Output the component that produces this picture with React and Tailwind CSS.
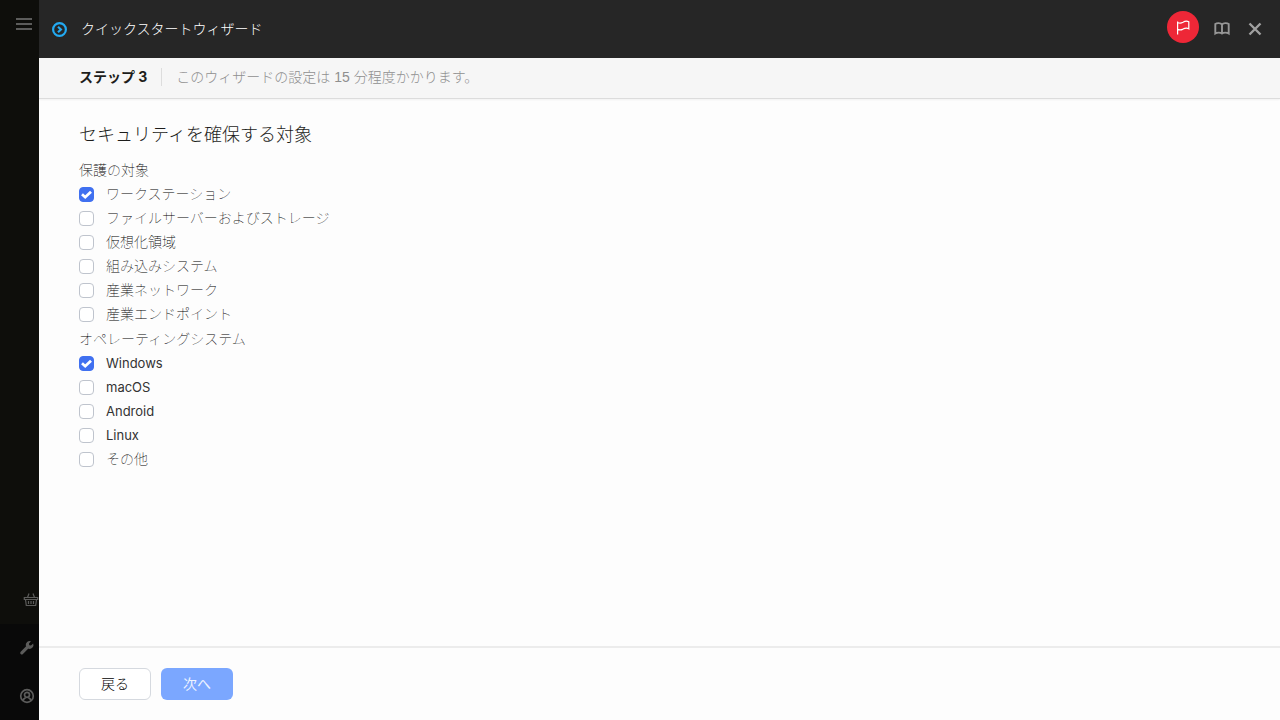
import { useState } from "react";

const latin = "font-['Inter',sans-serif] text-[13px] font-normal text-[#333333]";

const targets = [
  { id: "workstations", label: "ワークステーション", on: true },
  { id: "storage", label: "ファイルサーバーおよびストレージ" },
  { id: "virtual", label: "仮想化領域" },
  { id: "embedded", label: "組み込みシステム" },
  { id: "network", label: "産業ネットワーク" },
  { id: "endpoint", label: "産業エンドポイント" },
];

const systems = [
  { id: "windows", label: "Windows", on: true, textClass: latin },
  { id: "macos", label: "macOS", textClass: latin },
  { id: "android", label: "Android", textClass: latin },
  { id: "linux", label: "Linux", textClass: latin },
  { id: "other", label: "その他" },
];

function Option({ id, label, on = false, textClass = "" }) {
  const [checked, setChecked] = useState(on);
  return (
    <div className="flex h-6 items-center gap-3">
      <span className="relative flex size-[15px]">
        <input
          id={id}
          type="checkbox"
          checked={checked}
          onChange={(e) => setChecked(e.target.checked)}
          className="size-[15px] appearance-none rounded-[4px] border border-[#bfc4cd] bg-white checked:border-[#4070f0] checked:bg-[#4070f0]"
        />
        {checked && (
          <svg viewBox="0 0 15 15" className="pointer-events-none absolute inset-0 size-[15px]" fill="none" stroke="#fff" strokeWidth="2.8" aria-hidden="true">
            <path d="M3 7.3 6.2 10.2 12 4.8" />
          </svg>
        )}
      </span>
      <label htmlFor={id} className={textClass}>{label}</label>
    </div>
  );
}

function Group({ title, items }) {
  return (
    <fieldset>
      <legend className="h-6 leading-6">{title}</legend>
      {items.map((item) => (
        <Option key={item.id} {...item} />
      ))}
    </fieldset>
  );
}

function Sidebar() {
  return (
    <nav className="flex w-[39px] shrink-0 flex-col justify-between overflow-hidden bg-[#0e0e0b] text-[#5c5c5b]">
      <button type="button" aria-label="メニュー" className="mt-4 ml-4 size-4">
        <svg viewBox="0 0 16 16" className="size-4" stroke="currentColor" strokeWidth="2" aria-hidden="true">
          <path d="M0 3H16M0 8H16M0 13H16" />
        </svg>
      </button>
      <div>
        <button type="button" aria-label="ストア" className="mb-4 ml-[23px] block size-4">
          <svg viewBox="0 0 16 16" className="size-4" fill="none" stroke="currentColor" strokeWidth="1.2" aria-hidden="true">
            <path d="M1.3 5.5H14.7V7.5H1.3ZM2.5 7.5 3.3 13.5H12.7L13.5 7.5M4.5 5.5 6 1.5M11.5 5.5 10 1.5" />
            <path d="M5.5 9V12M8 9V12M10.5 9V12" />
          </svg>
        </button>
        <div className="flex h-24 flex-col gap-8 bg-[#090909] pt-4 pl-[19px]">
          <button type="button" aria-label="設定" className="size-4">
            <svg viewBox="0 0 16 16" className="size-4" aria-hidden="true">
              <path d="M2.8 12.8 9 6.6" stroke="currentColor" strokeWidth="3.2" strokeLinecap="round" />
              <path d="M12 1.2A4 4 0 0 0 6.8 5.8L9.6 8.8A4 4 0 0 0 14.2 3.5L12 5.6 10.2 5.3 10 3.4Z" fill="currentColor" />
            </svg>
          </button>
          <button type="button" aria-label="アカウント" className="size-4">
            <svg viewBox="0 0 16 16" className="size-4" fill="none" stroke="currentColor" strokeWidth="1.7" aria-hidden="true">
              <circle cx="8" cy="8" r="6.3" />
              <circle cx="8" cy="6.8" r="2.5" />
              <path d="M4 12.5C4.5 10.8 5.5 10.3 6.6 9.8M12 12.5C11.5 10.8 10.5 10.3 9.4 9.8" />
            </svg>
          </button>
        </div>
      </div>
    </nav>
  );
}

export default function App() {
  return (
    <div className="flex min-h-screen font-['Liberation_Sans','Noto_Sans_CJK_JP',sans-serif] text-sm text-[#1d1d1b]">
      <Sidebar />
      <main className="flex min-w-0 flex-1 flex-col bg-[#fdfdfd]">
        <header className="flex h-[58px] shrink-0 items-center bg-[#262626] pr-[18px] pl-3 text-white">
          <svg viewBox="0 0 16 16" className="mr-3.5 size-4" fill="none" stroke="#23aaf2" strokeWidth="2.2" aria-hidden="true">
            <circle cx="8.5" cy="8.5" r="6.4" />
            <path d="M7 5.7 9.9 8.5 7 11.3" />
          </svg>
          <h1 className="flex-1 font-light">クイックスタートウィザード</h1>
          <button type="button" aria-label="フラグ" className="mb-1 flex size-8 items-center justify-center rounded-full bg-[#ee2737]">
            <svg viewBox="0 0 16 16" className="size-4" fill="none" stroke="#fff" strokeWidth="1.2" aria-hidden="true">
              <path d="M2.6 2.5V15.5M2.6 3.5C4 4.2 6 4.4 8 3.3 10 2 12 1.8 13.8 2.8V9.8C12 8.6 10.2 8.8 8 10.1 6 11.2 4 11 2.6 10.4" />
            </svg>
          </button>
          <button type="button" aria-label="ヘルプ" className="ml-[15px] size-4 text-[#969696]">
            <svg viewBox="0 0 16 16" className="size-4" fill="none" stroke="currentColor" strokeWidth="1.9" aria-hidden="true">
              <path d="M8 3.5C6.5 1.8 3 1.8 1.3 3V12.5C3 11.3 6.5 11.3 8 12.5 9.5 11.3 13 11.3 14.7 12.5V3C13 1.8 9.5 1.8 8 3.5ZM8 3.5V12.5" />
            </svg>
          </button>
          <button type="button" aria-label="閉じる" className="ml-[18px] size-[14px] text-[#a0a0a0]">
            <svg viewBox="0 0 14 14" className="size-[14px]" stroke="currentColor" strokeWidth="2.4" aria-hidden="true">
              <path d="M1.5 1.5 12.5 12.5M12.5 1.5 1.5 12.5" />
            </svg>
          </button>
        </header>
        <div className="flex h-[41px] shrink-0 items-center border-b border-[#dcdcdc] bg-[#f6f6f6] pb-0.5 pl-10 shadow-xs">
          <strong className="font-['Inter','Noto_Sans_CJK_JP',sans-serif] font-bold">ステップ 3</strong>
          <span className="ml-3.5 h-[18px] w-px bg-[#dddddd]" />
          <span className="ml-3.5 font-light text-[#8f8f8f]">このウィザードの設定は 15 分程度かかります。</span>
        </div>
        <section className="flex-1 px-10 pt-[22px]">
          <h2 className="mb-[9px] text-lg font-light">セキュリティを確保する対象</h2>
          <div className="flex flex-col gap-px font-thin text-black">
            <Group title="保護の対象" items={targets} />
            <Group title="オペレーティングシステム" items={systems} />
          </div>
        </section>
        <footer className="flex h-[74px] shrink-0 gap-2.5 border-t-2 border-[#ececec] px-10 pt-5">
          <button type="button" className="h-8 w-[72px] rounded-md border border-[#d5d9df] bg-white font-light text-black">戻る</button>
          <button type="button" className="h-8 w-[72px] rounded-md bg-[#7ba7ff] text-[#eef3ff]">次へ</button>
        </footer>
      </main>
    </div>
  );
}
